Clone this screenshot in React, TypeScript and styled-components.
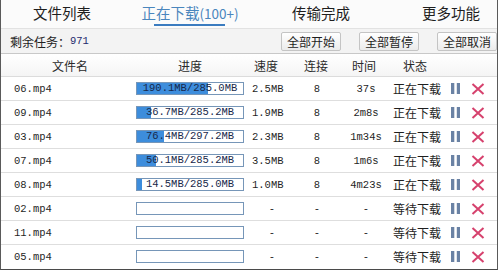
import React from "react";
import styled, { createGlobalStyle } from "styled-components";

const Global = createGlobalStyle`
  html, body { margin: 0; padding: 0; background: #ffffff; }
  body { font-family: "Noto Sans CJK SC", "Noto Sans", sans-serif; }
`;

const CJK = `"Noto Sans CJK SC", "Noto Sans", sans-serif`;
const MONO = `"Liberation Mono", "Noto Sans CJK SC", monospace`;

const Frame = styled.div`
  width: 496px;
  height: 269px;
  border-left: 1px solid #5a5a5a;
  border-right: 1px solid #5a5a5a;
  border-bottom: 1px solid #4a4a4a;
  overflow: hidden;
  display: flex;
  flex-direction: column;
  background: #fff;
`;

const TabBar = styled.div`
  height: 28px;
  display: flex;
  background: #fbfbfb;
  border-bottom: 1px solid #e2e2e2;
  flex-shrink: 0;
`;

const Tab = styled.div<{ $w: number; $active?: boolean }>`
  position: relative;
  width: ${(p) => p.$w}px;
  flex-shrink: 0;
  display: flex;
  align-items: center;
  justify-content: center;
  font-family: ${CJK};
  font-size: 14.5px;
  line-height: 1;
  padding-bottom: 1px;
  color: ${(p) => (p.$active ? "#4a86bd" : "#1e1e1e")};
  &::after {
    content: "";
    display: ${(p) => (p.$active ? "block" : "none")};
    position: absolute;
    left: 50%;
    bottom: 2px;
    width: 71px;
    margin-left: -36px;
    height: 2px;
    background: #3b7cc0;
  }
`;

const TabCount = styled.span`
  font-family: ${CJK};
  font-size: 13.5px;
`;

const Toolbar = styled.div`
  height: 24px;
  display: flex;
  align-items: center;
  background: #f3f3f3;
  border-bottom: 1px solid #c8c8c8;
  padding-left: 9px;
  flex-shrink: 0;
`;

const Remain = styled.div`
  font-family: ${CJK};
  font-size: 12px;
  color: #222;
  display: flex;
  align-items: center;
  flex: 1;
`;

const RemainNum = styled.span`
  font-family: ${MONO};
  font-size: 10.5px;
  color: #1c2a6e;
`;

const Buttons = styled.div`
  display: flex;
  gap: 18px;
  flex-shrink: 0;
`;

const Btn = styled.button`
  width: 60px;
  height: 19px;
  padding: 0;
  border: 1px solid #c4c4c4;
  border-radius: 2px;
  background: linear-gradient(#ffffff, #ebebeb);
  font-family: ${CJK};
  font-size: 12px;
  color: #1e1e1e;
  line-height: 17px;
  flex-shrink: 0;
`;

const HeaderRow = styled.div`
  height: 22px;
  display: grid;
  grid-template-columns: 138px 102px 50px 50px 46px 56px 1fr;
  align-items: center;
  background: linear-gradient(#ffffff, #f5f5f5);
  border-bottom: 1px solid #dcdcdc;
  flex-shrink: 0;
`;

const HeadCell = styled.div`
  text-align: center;
  font-family: ${CJK};
  font-size: 12px;
  color: #2a2a2a;
`;

const Row = styled.div`
  height: 23px;
  display: grid;
  grid-template-columns: 122px 108px 8px 40px 50px 48px 3px 58px 20px 1fr;
  padding-left: 13px;
  align-items: center;
  border-bottom: 1px solid #dedede;
  flex-shrink: 0;
  &:last-child { border-bottom: none; }
`;

const Mono = styled.div<{ $align?: string }>`
  font-family: ${MONO};
  font-size: 10.5px;
  color: #1f1f1f;
  text-align: ${(p) => p.$align || "left"};
  white-space: nowrap;
`;

const Bar = styled.div`
  position: relative;
  height: 11px;
  border: 1px solid #7696b8;
  background: #fff;
  overflow: hidden;
`;

const Fill = styled.div`
  height: 100%;
  background: #3d8ddc;
`;

const BarText = styled.div`
  position: absolute;
  inset: 0;
  display: flex;
  align-items: center;
  justify-content: center;
  font-family: ${MONO};
  font-size: 10.5px;
  color: #18284a;
  line-height: 1;
`;

const Status = styled.div`
  font-family: ${CJK};
  font-size: 12px;
  color: #1e1e1e;
  white-space: nowrap;
`;

const Icon = styled.div`
  display: flex;
  align-items: center;
`;

const Pause = () => (
  <svg width="9" height="11" viewBox="0 0 9 11">
    <rect x="0" y="0" width="3.3" height="11" fill="#6a82a4" />
    <rect x="5.8" y="0" width="3.3" height="11" fill="#6a82a4" />
  </svg>
);

const Cross = () => (
  <svg width="14" height="12" viewBox="0 0 14 12">
    <path d="M1.5 1 L12.5 11 M12.5 1 L1.5 11" stroke="#d6416d" strokeWidth="2" strokeLinecap="butt" />
  </svg>
);

type Item = {
  name: string;
  done?: number;
  total?: number;
  label?: string;
  speed: string;
  conn: string;
  time: string;
  status: string;
};

const items: Item[] = [
  { name: "06.mp4", done: 190.1, total: 285.0, label: "190.1MB/285.0MB", speed: "2.5MB", conn: "8", time: "37s", status: "正在下载" },
  { name: "09.mp4", done: 36.7, total: 285.2, label: "36.7MB/285.2MB", speed: "1.9MB", conn: "8", time: "2m8s", status: "正在下载" },
  { name: "03.mp4", done: 76.4, total: 297.2, label: "76.4MB/297.2MB", speed: "2.3MB", conn: "8", time: "1m34s", status: "正在下载" },
  { name: "07.mp4", done: 50.1, total: 285.2, label: "50.1MB/285.2MB", speed: "3.5MB", conn: "8", time: "1m6s", status: "正在下载" },
  { name: "08.mp4", done: 14.5, total: 285.0, label: "14.5MB/285.0MB", speed: "1.0MB", conn: "8", time: "4m23s", status: "正在下载" },
  { name: "02.mp4", speed: "-", conn: "-", time: "-", status: "等待下载" },
  { name: "11.mp4", speed: "-", conn: "-", time: "-", status: "等待下载" },
  { name: "05.mp4", speed: "-", conn: "-", time: "-", status: "等待下载" },
];

export default function App() {
  return (
    <>
      <Global />
      <Frame>
        <TabBar>
          <Tab $w={122}>文件列表</Tab>
          <Tab $w={134} $active>
            正在下载<TabCount>(100+)</TabCount>
          </Tab>
          <Tab $w={128}>传输完成</Tab>
          <Tab $w={132}>更多功能</Tab>
        </TabBar>
        <Toolbar>
          <Remain>
            剩余任务：<RemainNum>971</RemainNum>
          </Remain>
          <Buttons>
            <Btn>全部开始</Btn>
            <Btn>全部暂停</Btn>
            <Btn>全部取消</Btn>
          </Buttons>
        </Toolbar>
        <HeaderRow>
          <HeadCell>文件名</HeadCell>
          <HeadCell>进度</HeadCell>
          <HeadCell>速度</HeadCell>
          <HeadCell>连接</HeadCell>
          <HeadCell>时间</HeadCell>
          <HeadCell>状态</HeadCell>
          <div />
        </HeaderRow>
        {items.map((it) => {
          const pct = it.done && it.total ? (it.done / it.total) * 100 : 0;
          const dash = it.speed === "-";
          return (
            <Row key={it.name}>
              <Mono>{it.name}</Mono>
              <Bar>
                <Fill style={{ width: `${pct}%` }} />
                {it.label && <BarText>{it.label}</BarText>}
              </Bar>
              <div />
              <Mono $align={dash ? "center" : "left"}>{it.speed}</Mono>
              <Mono $align="center">{it.conn}</Mono>
              <Mono $align="center">{it.time}</Mono>
              <div />
              <Status>{it.status}</Status>
              <Icon>
                <Pause />
              </Icon>
              <Icon>
                <Cross />
              </Icon>
            </Row>
          );
        })}
      </Frame>
    </>
  );
}
